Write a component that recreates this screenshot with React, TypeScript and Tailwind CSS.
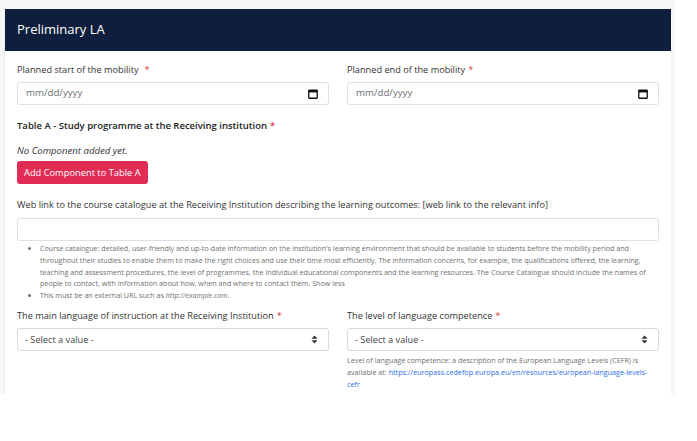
import React from "react";

const font = { fontFamily: '"Open Sans", "Noto Sans", sans-serif' };

const Req = () => <span className="text-[#dc3545] ml-[3px]">*</span>;

const CalendarIcon = () => (
  <svg width="10" height="10" viewBox="0 0 10 10" fill="none">
    <rect x="0.75" y="1.25" width="8.5" height="8" rx="0.5" stroke="#111" strokeWidth="1.3" />
    <rect x="0.75" y="1.25" width="8.5" height="2.2" fill="#111" />
  </svg>
);

const SortIcon = () => (
  <svg width="7" height="9" viewBox="0 0 7 9">
    <path d="M3.5 0.5 L6.5 3.7 H0.5 Z" fill="#333" />
    <path d="M3.5 8.5 L6.5 5.3 H0.5 Z" fill="#333" />
  </svg>
);

const DateField = ({ label, spaced }: { label: string; spaced?: boolean }) => (
  <div className="flex flex-col">
    <label className="text-[9.2px] text-[#333] leading-[14px] mb-[5px]">
      {label}
      {spaced ? <span className="text-[#dc3545] ml-[6px]">*</span> : <Req />}
    </label>
    <div className="h-[23px] border border-[#dcdfe4] rounded-[3px] bg-white flex items-center justify-between pl-[8px] pr-[10px]">
      <span className="text-[9.7px] text-[#6b6f76]">mm/dd/yyyy</span>
      <CalendarIcon />
    </div>
  </div>
);

const SelectField = () => (
  <div className="h-[23px] border border-[#d6d9de] rounded-[3px] bg-white flex items-center justify-between pl-[7px] pr-[10px]">
    <span className="text-[9.2px] text-[#444]">- Select a value -</span>
    <SortIcon />
  </div>
);

export default function App() {
  return (
    <div className="w-[697px] h-[441px] bg-white" style={font}>
      <div className="w-[675px] h-[394px] bg-[#f7f7f7] pt-[9px] pl-[4px] pr-[4px] overflow-hidden">
        <div className="h-full bg-white border-l border-[#ececec]">
          <div className="h-[42px] bg-[#0e1e3c] flex items-center px-[12px]">
            <h2 className="text-white text-[13px]">Preliminary LA</h2>
          </div>

          <div className="px-[12px] pt-[12px]">
            <div className="grid grid-cols-2 gap-x-[18px]">
              <DateField label="Planned start of the mobility" spaced />
              <DateField label="Planned end of the mobility" />
            </div>

            <h3 className="mt-[14px] text-[9.5px] font-semibold text-[#222] leading-[14px]">
              Table A - Study programme at the Receiving institution
              <Req />
            </h3>
            <p className="mt-[11px] text-[9.6px] italic text-[#333] leading-[14px]">No Component added yet.</p>
            <button className="mt-[2px] h-[23px] px-[7px] rounded-[3px] bg-[#e12c56] text-white text-[9.3px]">
              Add Component to Table A
            </button>

            <label className="block mt-[14px] text-[9.2px] text-[#333] leading-[14px]">
              Web link to the course catalogue at the Receiving Institution describing the learning outcomes: [web link to the relevant info]
            </label>
            <div className="mt-[6px] h-[23px] border border-[#dcdfe4] rounded-[3px] bg-white" />
            <ul className="mt-[2px] pl-[23px] pr-[10px] list-disc text-[7.15px] text-[#6f6f6f] leading-[11.6px]">
              <li>
                Course catalogue: detailed, user-friendly and up-to-date information on the institution's learning environment that should be available to students before the mobility period and throughout their studies to enable them to make the right choices and use their time most efficiently. The information concerns, for example, the qualifications offered, the learning, teaching and assessment procedures, the level of programmes, the individual educational components and the learning resources. The Course Catalogue should include the names of people to contact, with information about how, when and where to contact them. Show less
              </li>
              <li>
                This must be an external URL such as <em>http://example.com</em>.
              </li>
            </ul>

            <div className="mt-[8px] grid grid-cols-2 gap-x-[18px]">
              <div className="flex flex-col">
                <label className="text-[9.2px] text-[#333] leading-[14px] mb-[5px]">
                  The main language of instruction at the Receiving Institution
                  <Req />
                </label>
                <SelectField />
              </div>
              <div className="flex flex-col">
                <label className="text-[9.2px] text-[#333] leading-[14px] mb-[5px]">
                  The level of language competence
                  <Req />
                </label>
                <SelectField />
                <p className="mt-[3px] text-[7.2px] text-[#6f6f6f] leading-[12px]">
                  Level of language competence: a description of the European Language Levels (CEFR) is available at:{" "}
                  <a className="text-[#2a6ee8]" href="#">
                    https://europass.cedefop.europa.eu/en/resources/european-language-levels-cefr
                  </a>
                </p>
              </div>
            </div>
          </div>
        </div>
      </div>
    </div>
  );
}
